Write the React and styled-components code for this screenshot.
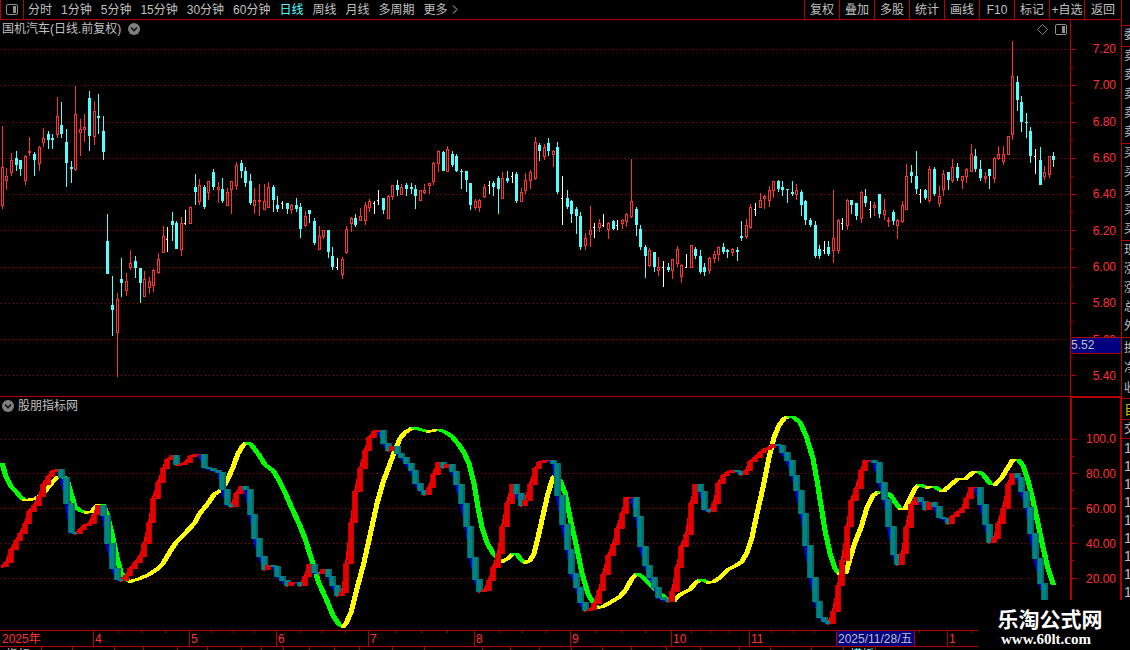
import styled, { createGlobalStyle, ThemeProvider } from "styled-components";

const theme = {
  bg: "#000",
  text: "#c0c0c0",
  line: "#b40000",
  up: "#ff3232",
  down: "#54ffff",
  navy: "#000080",
  font: `"Liberation Sans", "Noto Sans CJK SC", sans-serif`,
};

const GlobalStyle = createGlobalStyle`
  * {
    box-sizing: border-box;
  }
  body {
    margin: 0;
    background: ${(props) => props.theme.bg};
    color: ${(props) => props.theme.text};
    font: 12px/18px ${(props) => props.theme.font};
    overflow: hidden;
  }
  button {
    border: 0;
    padding: 0;
    background: none;
    font: inherit;
    color: inherit;
    white-space: nowrap;
    cursor: pointer;
  }
`;

const Page = styled.div`
  position: relative;
  display: grid;
  grid-template-columns: minmax(0, 1fr) 9px;
  height: 100vh;
  overflow: hidden;
`;

const Main = styled.main`
  display: grid;
  grid-template-rows: 20px minmax(0, 376fr) minmax(0, 234fr) 16px 4px;
  min-width: 0;
`;

const Toolbar = styled.header`
  display: flex;
  justify-content: space-between;
  border-bottom: 1px solid ${(props) => props.theme.line};
`;

const Periods = styled.nav`
  display: flex;
  align-items: center;
  gap: 9px;
`;

const PeriodButton = styled.button`
  color: ${(props) => (props.$active ? props.theme.down : props.theme.text)};
`;

const LayoutButton = styled.button`
  display: flex;
  align-items: center;
  justify-content: center;
  align-self: stretch;
  width: 24px;
  margin-right: -5px;
  border: solid ${(props) => props.theme.line};
  border-width: 0 1px;
`;

const MoreArrow = styled.svg`
  margin-left: -5px;
`;

const Tools = styled.div`
  display: flex;
`;

const ToolButton = styled.button`
  width: 35px;
  border-left: 1px solid ${(props) => props.theme.line};

  &:last-child {
    width: 37px;
  }
`;

const Panel = styled.section`
  display: grid;
  grid-template-columns: minmax(0, 1fr) 51px;
  min-height: 0;
  border-top: ${(props) => (props.$divided ? "1px" : "0")} solid
    ${(props) => props.theme.line};
`;

const Plot = styled.div`
  display: flex;
  flex-direction: column;
  min-height: 0;
`;

const PanelHeader = styled.div`
  display: flex;
  align-items: center;
  gap: ${(props) => props.$gap}px;
  height: 18px;
  padding: 0 3px 0 2px;
`;

const PanelTitle = styled.h2`
  margin: 0;
  font-size: 12px;
  font-weight: normal;
`;

const HeaderIcons = styled.div`
  display: flex;
  align-items: center;
  gap: 7px;
  margin-left: auto;
`;

const IconButton = styled.button`
  display: flex;
`;

const Chart = styled.svg`
  display: block;
  flex: 1;
  width: 100%;
  min-height: 0;
  shape-rendering: crispEdges;
`;

const Axis = styled.div`
  position: relative;
  display: flex;
  min-height: 0;
  border-left: ${(props) => (props.$heavy ? 2 : 1)}px solid
    ${(props) => props.theme.line};
  ${(props) =>
    props.$heavy &&
    `
    border-top: 1px solid ${props.theme.line};
    border-right: 1px solid ${props.theme.line};
  `}
`;

const AxisTicks = styled.svg`
  display: block;
  width: 5px;
  height: 100%;
  shape-rendering: crispEdges;
`;

const AxisLabels = styled.div`
  flex: 1;
  display: flex;
  flex-direction: column;
  padding: ${(props) => props.$pad};
  color: ${(props) => props.theme.up};

  span {
    flex: 1;
    display: flex;
    align-items: center;
    justify-content: flex-end;
  }
`;

const PriceBadge = styled.div`
  position: absolute;
  top: 317px;
  left: 0;
  right: 0;
  height: 17px;
  border: solid ${(props) => props.theme.line};
  border-width: 1px 0;
  background: ${(props) => props.theme.navy};
  line-height: 15px;
`;

const TimeAxis = styled.div`
  display: grid;
  grid-template-columns: 93fr 96fr 87fr 92fr 106fr 96fr 101fr 78fr 87fr 111fr 93fr 81fr;
  border-top: 1px solid ${(props) => props.theme.line};
  color: ${(props) => props.theme.up};
`;

const tick = (pos, color) =>
  `linear-gradient(${color}, ${color}) ${pos} 0 / 1px 2px no-repeat`;

const Month = styled.div`
  height: 15px;
  padding-left: 1px;
  border-left: 1px solid ${(props) => props.theme.line};
  line-height: 17px;
  white-space: nowrap;
  background: ${({ theme }) =>
    ["25%", "50%", "75%"].map((pos) => tick(pos, theme.line)).join(", ")};

  &:first-child,
  &:last-child {
    padding-left: 2px;
    border-left: 0;
    background: none;
  }
`;

const CursorDate = styled.span`
  display: inline-block;
  height: 15px;
  margin-left: -1px;
  padding: 0 1px;
  border-right: 1px solid ${(props) => props.theme.line};
  background: ${(props) => props.theme.navy};
  color: ${(props) => props.theme.text};
  vertical-align: top;
`;

const TabStrip = styled.div`
  display: flex;
  overflow: hidden;
  border-top: 1px solid ${(props) => props.theme.line};
`;

const Tab = styled.button`
  flex: ${(props) => props.$size} 0 0;
  min-width: 0;
  height: 16px;
  border-right: 1px solid ${(props) => props.theme.line};
  color: ${(props) => (props.$active ? props.theme.down : props.theme.text)};
  line-height: 16px;
  text-align: left;
  text-indent: 6px;
`;

const Quotes = styled.aside`
  overflow: hidden;
  padding-top: 25px;
  border-left: 1px solid ${(props) => props.theme.line};
`;

const QuoteGroup = styled.div`
  padding: 0 0 ${(props) => (props.$row === 19 ? 1 : 0)}px 2px;
  border-top: 1px solid ${(props) => props.theme.line};
  font-size: ${(props) => (props.$large ? 14 : 12)}px;
  line-height: ${(props) => props.$row}px;
  color: ${(props) => (props.$gold ? "#c0c000" : props.theme.text)};
  white-space: nowrap;
`;

const Watermark = styled.footer`
  position: absolute;
  right: 0;
  bottom: 0;
  display: flex;
  flex-direction: column;
  align-items: center;
  width: 152px;
  height: 50px;
  padding: 5px 8px 0 0;
  background: ${(props) => props.theme.bg};
  color: #fff;
`;

const WatermarkName = styled.strong`
  font: bold 21px/26px "Noto Sans CJK SC", sans-serif;
`;

const WatermarkSite = styled.span`
  margin: 1px 8px 0 0;
  font: bold 15px/15px "Liberation Serif", serif;
`;

const PERIODS = ["分时", "1分钟", "5分钟", "15分钟", "30分钟", "60分钟", "日线", "周线", "月线", "多周期", "更多"];
const TOOLS = ["复权", "叠加", "多股", "统计", "画线", "F10", "标记", "+自选", "返回"];
const PRICES = ["7.20", "7.00", "6.80", "6.60", "6.40", "6.20", "6.00", "5.80", "5.60", "5.40"];
const LEVELS = ["100.0", "80.00", "60.00", "40.00", "20.00"];
const PRICE_LINES = [49, 85, 122, 158, 194, 230, 267, 303, 339, 375];
const LEVEL_LINES = [439, 473, 508, 543, 578];
const MONTHS = ["2025年", "4", "5", "6", "7", "8", "9", "10", "11", "", "1", ""];
const TAB_SIZES = [42, 31, 42, 29, 33, 30, 34, 20, 21, 26, 24, 25, 33, 32, 58, 28, 28, 32, 31, 29, 35, 33, 39, 31, 41, 32, 32, 250];
const TAB_NAMES = { 0: "指标", 26: "模板" };

const QUOTES = [
  { row: 19, rows: ["委"] },
  { row: 19, rows: ["卖", "卖", "卖", "卖", "卖"] },
  { row: 19, rows: ["买", "买", "买", "买", "买"] },
  { row: 19, rows: ["现", "涨", "涨", "总", "外"] },
  { row: 20, rows: ["换", "净", "收"] },
  { row: 20, rows: ["自"], gold: true, large: true },
  { row: 18, rows: ["交"] },
  { row: 18, rows: ["1", "1", "1", "1", "1", "1", "1", "1", "1"], large: true },
];

// x, high, body top, body bottom, low, kind (r = up, c = down, w = flat)
const CANDLES = `
2,126,167,206,209,r 6,168,176,181,190,r 11,153,160,173,176,r 16,151,158,165,171,c 20,160,160,169,176,c
25,155,156,181,185,r 29,137,151,153,156,r 34,152,154,160,176,c 39,146,147,164,171,r 43,128,138,143,147,r
48,131,134,140,149,c 52,134,138,140,149,c 57,97,116,135,138,r 61,102,125,134,138,c 66,129,142,163,187,c
71,161,167,169,183,c 75,86,114,170,171,r 80,119,129,133,156,r 84,114,127,130,142,r 89,91,98,136,151,c
94,101,111,137,145,r 98,94,116,118,134,c 103,116,131,152,160,c 107,214,241,274,274,c 112,276,305,310,336,c
117,293,299,333,377,r 121,258,279,283,297,c 126,273,281,291,296,r 130,250,263,268,270,r 135,256,261,268,278,c
140,268,268,283,303,c 144,271,279,297,297,r 149,277,281,288,294,r 153,269,270,286,292,r 158,253,259,273,274,r
163,226,236,253,253,r 167,227,239,239,252,w 172,212,221,225,241,c 176,221,223,249,249,c 181,217,223,250,256,r
185,210,223,223,225,w 190,206,207,224,224,r 195,174,187,192,205,c 199,179,185,202,205,r 204,185,187,207,209,c
208,181,181,193,200,r 213,169,172,187,190,c 218,182,187,190,203,r 222,178,189,201,203,c 227,188,192,206,206,r
231,181,181,190,214,r 236,162,165,186,190,r 241,160,163,171,178,c 245,167,171,183,187,c 250,174,181,203,205,c
254,188,200,206,214,r 259,184,200,202,216,r 264,184,201,210,210,r 268,182,187,208,208,r 273,185,187,200,212,c
277,196,205,209,212,c 282,201,203,203,209,w 287,203,203,209,214,c 291,204,205,210,214,r 296,198,205,209,212,c
300,203,207,229,238,c 305,211,216,226,227,r 309,210,210,214,223,c 314,218,221,243,245,c 319,226,236,250,250,r
323,230,230,237,239,r 328,230,230,252,258,c 332,247,256,267,270,c 337,258,267,267,270,w 342,257,259,275,279,r
346,226,229,253,254,r 351,217,218,224,232,r 355,214,218,225,227,c 360,208,216,221,221,r 365,202,205,221,225,r
369,199,201,208,212,r 374,201,203,203,214,w 378,190,200,200,205,w 383,198,198,210,214,c 388,195,196,219,219,r
392,185,185,197,200,r 397,180,185,190,196,c 401,184,187,195,195,r 406,183,185,189,196,c 411,183,187,189,194,c
415,185,189,196,209,c 420,190,190,201,201,r 424,184,190,193,194,r 429,183,183,186,194,r 433,162,163,182,185,r
438,150,151,164,172,r 443,151,152,171,171,c 447,146,149,172,172,r 452,151,154,165,167,c 456,154,156,171,172,c
461,169,171,172,189,c 466,171,171,180,192,c 470,183,183,205,210,c 475,199,201,208,210,r 479,199,200,208,212,r
484,184,187,197,198,r 489,181,185,185,194,w 493,181,183,187,196,c 498,176,178,189,214,c 502,172,178,199,199,r
507,171,178,181,183,c 512,172,176,176,183,w 516,172,174,201,203,c 521,188,192,202,202,r 525,173,180,191,194,r
530,170,172,181,189,r 535,137,142,179,180,r 539,143,145,151,161,c 544,144,147,157,160,r 548,138,143,151,156,c
553,150,151,155,167,r 557,142,147,192,194,c 562,176,198,198,225,w 567,190,198,207,209,c 571,200,201,214,223,c
576,207,209,216,234,c 580,212,216,247,250,c 585,233,238,246,250,r 590,206,230,235,247,r 594,223,227,227,238,w
599,219,223,228,232,r 603,214,225,225,227,w 608,222,223,230,239,r 613,220,221,229,230,c 617,220,225,225,230,w
622,219,220,224,229,r 626,213,214,222,227,r 631,159,201,217,218,r 636,207,209,225,236,c 640,225,229,247,250,c
645,245,247,256,278,c 649,248,250,266,267,r 654,252,252,267,272,c 658,257,267,271,276,r 663,261,267,267,287,w
668,263,267,270,272,c 672,259,259,271,279,r 677,246,249,264,267,r 681,264,265,277,283,r 686,254,267,267,268,w
691,245,245,268,268,r 695,247,249,256,259,c 700,250,256,272,274,c 704,263,267,272,276,c 709,257,258,271,274,r
714,251,254,259,263,r 718,246,247,255,261,r 723,243,247,252,254,c 727,249,250,252,258,c 732,248,249,253,256,r
737,247,250,252,261,c 741,221,236,238,241,c 746,219,225,237,239,r 750,204,207,228,229,r 755,203,209,209,216,w
760,193,200,208,208,r 764,195,196,199,209,r 769,186,190,201,207,r 773,181,181,191,198,r 778,180,181,189,192,c
782,181,187,190,196,c 787,189,189,190,203,c 792,181,192,194,196,c 796,184,190,195,200,r 801,190,192,205,216,c
805,200,201,220,225,c 810,218,220,225,227,c 815,221,225,256,258,c 819,245,249,256,259,c 824,241,250,250,254,w
828,241,247,254,256,c 833,190,238,251,263,r 838,219,220,251,254,r 842,218,223,223,230,w 847,199,200,226,230,r
851,200,200,205,214,c 856,203,203,216,220,c 861,191,192,219,223,r 865,189,196,203,207,c 870,201,209,209,218,w
874,202,205,208,216,r 879,194,194,214,218,c 884,199,210,215,220,r 888,217,220,222,227,r 893,210,212,221,225,c
897,219,220,226,239,r 902,201,205,222,223,r 906,164,176,210,210,r 911,165,172,176,183,c 916,151,176,189,194,c
920,189,194,194,203,w 925,189,190,198,200,c 929,166,169,201,203,r 934,167,169,194,196,c 939,186,196,204,207,r
943,170,174,190,196,r 948,172,172,180,190,c 952,159,167,181,183,r 957,163,167,178,181,c 962,176,176,181,189,r
966,168,169,177,183,r 971,144,154,172,172,r 975,149,156,169,172,c 980,160,169,178,181,c 985,172,176,179,183,r
989,169,169,176,189,c 994,157,158,179,183,r 998,146,154,159,160,r 1003,146,154,162,165,r 1008,136,136,155,155,r
1012,41,76,135,140,r 1017,76,82,100,111,c 1021,96,102,122,132,c 1026,113,122,123,138,c 1030,127,131,156,163,c
1035,149,156,156,174,w 1040,147,160,185,185,c 1044,166,172,177,180,r 1049,156,156,175,178,r 1053,152,156,160,167,c`;

// fast line: x,y
const FAST = `
2,566 6,562 11,549 16,540 20,533 25,523 29,511 34,505 39,496 43,484 48,476 52,471 57,469 61,477 66,503 71,532
75,533 80,529 84,525 89,523 94,514 98,505 103,515 107,543 112,568 117,579 121,580 126,575 130,568 135,562
140,556 144,543 149,522 153,498 158,482 163,468 167,459 172,455 176,464 181,464 185,462 190,456 195,454 199,454
204,467 208,468 213,470 218,472 222,489 227,504 231,506 236,493 241,486 245,489 250,514 254,538 259,556 264,569
268,565 273,566 277,576 282,580 287,585 291,582 296,582 300,585 305,576 309,564 314,572 319,573 323,569 328,576
332,585 337,595 342,592 346,563 351,522 355,491 360,468 365,450 369,437 374,431 378,430 383,443 388,450 392,446
397,453 401,457 406,463 411,470 415,483 420,490 424,494 429,487 433,474 438,462 443,467 447,464 452,471 456,484
461,503 466,526 470,557 475,579 479,591 484,590 489,580 493,567 498,553 502,526 507,503 512,484 516,493 521,505
525,500 530,484 535,468 539,462 544,460 548,460 553,463 557,495 562,524 567,549 571,573 576,587 580,602 585,610
590,609 594,603 599,590 603,574 608,555 613,544 617,528 622,513 626,497 631,497 636,516 640,546 645,565 649,577
654,587 658,597 663,599 668,601 672,591 677,567 681,546 686,534 691,503 695,484 700,491 704,509 709,511 714,503
718,483 723,475 727,472 732,470 737,471 741,474 746,470 750,461 755,457 760,452 764,449 769,447 773,444 778,445
782,452 787,460 792,475 796,490 801,513 805,545 810,577 815,601 819,617 824,621 828,623 833,611 838,585 842,560
847,526 851,500 856,488 861,470 865,460 870,460 874,462 879,482 884,499 888,526 893,554 897,564 902,553 906,527
911,504 916,497 920,501 925,509 929,502 934,506 939,517 943,518 948,523 952,516 957,512 962,508 966,498 971,487
975,487 980,504 985,524 989,542 994,538 998,523 1003,508 1008,484 1012,473 1017,477 1021,491 1026,507 1030,533
1035,558 1040,583 1044,600 1049,612`;

// slow line: x,y
const SLOW = `
2,463 6,476 11,486 16,491 20,496 24,499 30,499 36,498 43,493 48,487 53,481 58,476 64,476 68,482 71,493 75,506
80,510 86,512 92,511 97,505 103,504 107,513 112,533 117,557 121,572 126,579 130,581 140,578 149,574 158,568
163,563 167,556 172,548 176,542 185,533 195,522 199,514 208,503 214,494 222,489 227,480 233,467 238,453 243,445
247,442 251,444 258,453 265,464 273,470 278,478 285,492 292,508 299,523 305,538 312,560 319,583 326,598 333,615
339,624 343,626 346,623 351,612 357,588 364,562 370,535 377,503 383,482 390,463 395,450 400,438 405,432 413,427
420,429 428,431 434,430 439,429 446,432 452,436 458,443 464,452 469,463 474,483 478,507 482,527 487,542 493,553
498,558 502,561 508,558 513,553 517,554 521,559 525,562 530,560 534,553 538,537 543,515 548,493 553,477 556,475
560,480 565,492 571,522 577,548 582,573 588,593 594,604 598,607 603,606 612,601 620,596 626,589 632,578 637,573
642,576 649,583 660,593 668,599 674,600 679,595 684,592 690,589 695,583 700,579 704,580 708,582 714,581 720,577
728,569 736,565 742,561 747,552 752,537 757,513 763,487 769,457 774,437 779,425 784,418 789,416 794,417 800,422
806,435 813,458 817,480 821,505 825,530 830,553 835,568 839,573 846,572 850,558 855,542 861,527 867,507 873,495
879,491 886,492 890,494 896,503 900,508 905,508 910,498 915,488 919,484 927,487 934,486 941,490 944,490 950,485
957,479 966,478 974,471 979,471 984,475 990,483 995,484 1002,477 1008,467 1013,459 1018,459 1023,465 1028,480
1033,500 1038,523 1043,547 1048,568 1053,583`;

const parse = (text) =>
  text
    .trim()
    .split(/\s+/)
    .map((row) => row.split(",").map((v) => (isNaN(v) ? v : Number(v))));

const candles = parse(CANDLES);
const fast = parse(FAST);
const slow = parse(SLOW);

function GridLines({ lines }) {
  return lines.map((y) => (
    <line key={y} x1="1" x2="1068" y1={y + 0.5} y2={y + 0.5} stroke={theme.line} strokeDasharray="1 3" />
  ));
}

function Candle({ data: [x, high, top, bottom, low, kind] }) {
  if (kind === "w") {
    return (
      <g fill="#fff">
        <rect x={x} y={high} width="1" height={low - high} />
        <rect x={x - 1} y={top} width="1" height="1" />
      </g>
    );
  }
  return (
    <g fill={kind === "r" ? theme.up : theme.down}>
      <rect x={x} y={high} width="1" height={low - high} />
      <rect x={x - 1} y={top} width="3" height={Math.max(bottom - top, 1)} />
      {kind === "r" && bottom - top > 2 && (
        <rect x={x} y={top + 1} width="1" height={bottom - top - 2} fill={theme.bg} />
      )}
    </g>
  );
}

// A pen that is wide sideways only, so flat parts of the line stay thin
function Ribbon({ points, width, rise, fall }) {
  return points.slice(1).map(([x, y], i) => {
    const [px, py] = points[i];
    const l = width / 2;
    const falling = y > py;
    const outline = falling
      ? [[px - l, py], [px + l, py], [x + l, y], [x + l, y + 1], [x - l, y + 1], [px - l, py + 1]]
      : [[px - l, py], [x - l, y], [x + l, y], [x + l, y + 1], [px + l, py + 1], [px - l, py + 1]];
    const color = falling ? fall : rise;
    return <polygon key={x} points={outline.join(" ")} fill={color} stroke={color} />;
  });
}

function Steps({ points }) {
  return points.slice(1).map(([x, y], i) => {
    const py = points[i][1];
    const top = Math.min(y, py);
    const height = Math.abs(y - py) + 1;
    const up = y <= py;
    return (
      <g key={x}>
        <rect x={x - 3} y={top} width={up ? 6 : 7} height={height} fill={up ? "#c80000" : "#006c6c"} />
        <rect x={x - 2} y={top} width="4" height={height} fill={up ? "#e60000" : "#008484"} />
      </g>
    );
  });
}

function Ticks({ lines, top, height }) {
  const half = (lines[1] - lines[0]) / 2;
  return (
    <AxisTicks viewBox={`0 ${top} 5 ${height}`} preserveAspectRatio="none" aria-hidden="true">
      {lines.map((y, i) => (
        <g key={y} fill={theme.line}>
          <rect x="0" y={y} width="5" height="1" />
          {i < lines.length - 1 && <rect x="0" y={Math.round(y + half)} width="2" height="1" />}
        </g>
      ))}
    </AxisTicks>
  );
}

function PaneIcon() {
  return (
    <svg width="12" height="11" viewBox="0 0 12 11">
      <rect x="0.5" y="0.5" width="11" height="10" rx="1.5" fill="none" stroke="#909090" />
      <rect x="7" y="2" width="3" height="7" fill="#909090" />
    </svg>
  );
}

function DropIcon() {
  return (
    <svg width="12" height="12" viewBox="0 0 12 12">
      <circle cx="6" cy="6" r="6" fill="#808080" />
      <path d="M3 4.5 L6 7.5 L9 4.5" fill="none" stroke="#111" strokeWidth="1.6" />
    </svg>
  );
}

function App() {
  return (
    <ThemeProvider theme={theme}>
      <GlobalStyle />
      <Page>
        <Main>
          <Toolbar>
            <Periods>
              <LayoutButton aria-label="布局">
                <PaneIcon />
              </LayoutButton>
              {PERIODS.map((name) => (
                <PeriodButton key={name} $active={name === "日线"}>
                  {name}
                </PeriodButton>
              ))}
              <MoreArrow width="6" height="9" viewBox="0 0 6 9">
                <path d="M1 0.5 L5 4.5 L1 8.5" fill="none" stroke={theme.text} />
              </MoreArrow>
            </Periods>
            <Tools>
              {TOOLS.map((name) => (
                <ToolButton key={name}>{name}</ToolButton>
              ))}
            </Tools>
          </Toolbar>

          <Panel>
            <Plot>
              <PanelHeader $gap={7}>
                <PanelTitle>国机汽车(日线.前复权)</PanelTitle>
                <IconButton aria-label="切换股票">
                  <DropIcon />
                </IconButton>
                <HeaderIcons>
                  <IconButton aria-label="标记点">
                    <svg width="11" height="11" viewBox="0 0 11 11">
                      <path d="M5.5 0.5 L10.5 5.5 L5.5 10.5 L0.5 5.5 Z" fill="none" stroke="#808080" />
                    </svg>
                  </IconButton>
                  <IconButton aria-label="侧栏">
                    <PaneIcon />
                  </IconButton>
                </HeaderIcons>
              </PanelHeader>
              <Chart viewBox="0 38 1070 358" preserveAspectRatio="none">
                <GridLines lines={PRICE_LINES} />
                {candles.map((c) => (
                  <Candle key={c[0]} data={c} />
                ))}
              </Chart>
            </Plot>
            <Axis>
              <Ticks lines={PRICE_LINES} top={20} height={376} />
              <AxisLabels $pad="11px 5px 2px 0">
                {PRICES.map((p) => (
                  <span key={p}>{p}</span>
                ))}
              </AxisLabels>
              <PriceBadge>5.52</PriceBadge>
            </Axis>
          </Panel>

          <Panel $divided>
            <Plot>
              <PanelHeader $gap={4}>
                <IconButton aria-label="切换指标">
                  <DropIcon />
                </IconButton>
                <PanelTitle>股朋指标网</PanelTitle>
              </PanelHeader>
              <Chart viewBox="0 415 1070 215" preserveAspectRatio="none">
                <GridLines lines={LEVEL_LINES} />
                <Ribbon points={slow} width={4} rise="#ffff00" fall="#00ff00" />
                <Ribbon points={fast} width={1} rise="#ff0000" fall="#0000ff" />
                <Steps points={fast} />
              </Chart>
            </Plot>
            <Axis $heavy>
              <Ticks lines={LEVEL_LINES} top={398} height={232} />
              <AxisLabels $pad="24px 4px 34px 0">
                {LEVELS.map((p) => (
                  <span key={p}>{p}</span>
                ))}
              </AxisLabels>
            </Axis>
          </Panel>

          <TimeAxis>
            {MONTHS.map((m, i) => (
              <Month key={i}>{i === 9 ? <CursorDate>2025/11/28/五</CursorDate> : m}</Month>
            ))}
          </TimeAxis>

          <TabStrip>
            {TAB_SIZES.map((size, i) => (
              <Tab key={i} $size={size} $active={i === 26} aria-label={`指标${i + 1}`}>
                {TAB_NAMES[i]}
              </Tab>
            ))}
          </TabStrip>
        </Main>

        <Quotes>
          {QUOTES.map((group, i) => (
            <QuoteGroup key={i} $row={group.row} $gold={group.gold} $large={group.large}>
              {group.rows.map((row, j) => (
                <div key={j}>{row}</div>
              ))}
            </QuoteGroup>
          ))}
        </Quotes>

        <Watermark>
          <WatermarkName>乐淘公式网</WatermarkName>
          <WatermarkSite>www.60lt.com</WatermarkSite>
        </Watermark>
      </Page>
    </ThemeProvider>
  );
}

export default App;
